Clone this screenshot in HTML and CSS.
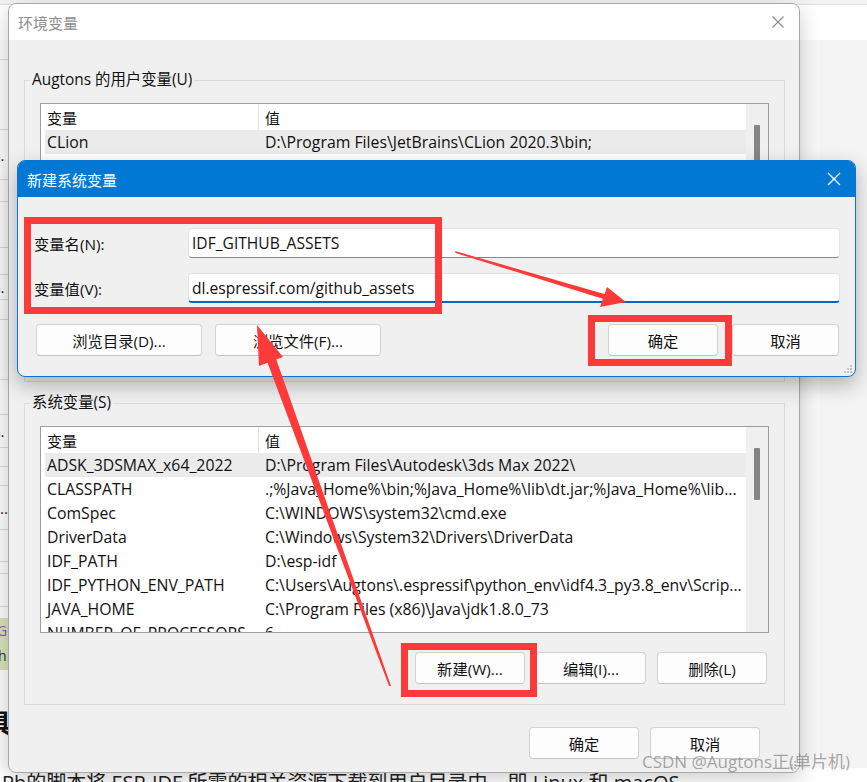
FILE: index.html
```html
<!DOCTYPE html>
<html lang="zh-CN">
<head>
<meta charset="utf-8">
<title>环境变量</title>
<link rel="stylesheet" href="styles.css">
</head>
<body>
<div class="desktop">

  <div class="bg-window">
    <div class="bg-top"></div>
    <div class="bg-main">
      <div class="bg-left">
        <div class="bl ra"></div>
        <div class="bl rb"></div>
        <div class="bl rc"><span>).</span></div>
        <div class="bl rd"></div>
        <div class="bl re"></div>
        <div class="bl rf"></div>
        <div class="bl rg"><span>).</span></div>
        <div class="bl rh"></div>
        <div class="bl ri"></div>
        <div class="bl rj"></div>
        <div class="bl rk"><span>).</span></div>
        <div class="bl rl"></div>
        <div class="bl rm"></div>
        <div class="bl rn"><span>...</span></div>
        <div class="bl ro"></div>
        <div class="bl rp"></div>
        <div class="bl rq"></div>
        <div class="bl-green"><span class="g">G</span><span class="h">h</span></div>
        <div class="bl-head">具</div>
      </div>
      <div class="bg-center"></div>
      <div class="bg-strip"></div>
    </div>
    <div class="bg-foot">Pb的脚本将 ESP-IDF 所需的相关资源下载到用户目录中，即 Linux 和 macOS</div>
  </div>

  <div class="env">
    <div class="env-title">
      <span>环境变量</span>
      <svg width="12" height="12" viewBox="0 0 12 12"><path d="M0.5 0.5 L11.5 11.5 M11.5 0.5 L0.5 11.5" stroke="#8a8a8a" stroke-width="1.1" fill="none"/></svg>
    </div>
    <div class="env-body">
      <div class="group">
        <span class="group-title">Augtons 的用户变量(U)</span>
        <div class="list">
          <div class="list-main">
            <div class="lrow head"><span class="c1">变量</span><span class="c2">值</span></div>
            <div class="lrow sel"><span class="c1">CLion</span><span class="c2">D:\Program Files\JetBrains\CLion 2020.3\bin;</span></div>
          </div>
          <div class="scroll"><div class="thumb"></div></div>
        </div>
        <div class="actions">
          <button class="btn">新建(N)...</button>
          <button class="btn">编辑(E)...</button>
          <button class="btn">删除(D)</button>
        </div>
      </div>

      <div class="group g2">
        <span class="group-title">系统变量(S)</span>
        <div class="list">
          <div class="list-main">
            <div class="lrow head"><span class="c1">变量</span><span class="c2">值</span></div>
            <div class="lrow sel"><span class="c1">ADSK_3DSMAX_x64_2022</span><span class="c2">D:\Program Files\Autodesk\3ds Max 2022\</span></div>
            <div class="lrow"><span class="c1">CLASSPATH</span><span class="c2">.;%Java_Home%\bin;%Java_Home%\lib\dt.jar;%Java_Home%\lib...</span></div>
            <div class="lrow"><span class="c1">ComSpec</span><span class="c2">C:\WINDOWS\system32\cmd.exe</span></div>
            <div class="lrow"><span class="c1">DriverData</span><span class="c2">C:\Windows\System32\Drivers\DriverData</span></div>
            <div class="lrow"><span class="c1">IDF_PATH</span><span class="c2">D:\esp-idf</span></div>
            <div class="lrow"><span class="c1">IDF_PYTHON_ENV_PATH</span><span class="c2">C:\Users\Augtons\.espressif\python_env\idf4.3_py3.8_env\Scrip...</span></div>
            <div class="lrow"><span class="c1">JAVA_HOME</span><span class="c2">C:\Program Files (x86)\Java\jdk1.8.0_73</span></div>
            <div class="lrow"><span class="c1">NUMBER_OF_PROCESSORS</span><span class="c2">6</span></div>
          </div>
          <div class="scroll"><div class="thumb"></div></div>
        </div>
        <div class="actions">
          <button class="btn">新建(W)...</button>
          <button class="btn">编辑(I)...</button>
          <button class="btn">删除(L)</button>
        </div>
      </div>

      <div class="env-actions">
        <button class="btn">确定</button>
        <button class="btn">取消</button>
      </div>
    </div>
    <svg class="grip" width="10" height="10" viewBox="0 0 10 10"><g fill="#c4c4c4"><rect x="7" y="1" width="2" height="2"/><rect x="4" y="4" width="2" height="2"/><rect x="7" y="4" width="2" height="2"/><rect x="1" y="7" width="2" height="2"/><rect x="4" y="7" width="2" height="2"/><rect x="7" y="7" width="2" height="2"/></g></svg>
  </div>

  <div class="newvar">
    <div class="nv-title">
      <span>新建系统变量</span>
      <svg width="14" height="14" viewBox="0 0 14 14"><path d="M1 1 L13 13 M13 1 L1 13" stroke="#ffffff" stroke-width="1.3" fill="none"/></svg>
    </div>
    <div class="nv-body">
      <div class="nv-form">
        <label class="nv-label">变量名(N):</label>
        <div class="field">IDF_GITHUB_ASSETS</div>
        <label class="nv-label">变量值(V):</label>
        <div class="field focus">dl.espressif.com/github_assets</div>
      </div>
      <div class="nv-actions">
        <div class="nv-left">
          <button class="btn wide">浏览目录(D)...</button>
          <button class="btn wide">浏览文件(F)...</button>
        </div>
        <div class="nv-right">
          <button class="btn ok">确定</button>
          <button class="btn cancel">取消</button>
        </div>
      </div>
    </div>
    <svg class="grip" width="10" height="10" viewBox="0 0 10 10"><g fill="#c4c4c4"><rect x="7" y="1" width="2" height="2"/><rect x="4" y="4" width="2" height="2"/><rect x="7" y="4" width="2" height="2"/><rect x="1" y="7" width="2" height="2"/><rect x="4" y="7" width="2" height="2"/><rect x="7" y="7" width="2" height="2"/></g></svg>
  </div>

  <svg class="annot" width="867" height="782" viewBox="0 0 867 782">
    <g fill="none" stroke="#fc3a3a" stroke-width="7">
      <rect x="27.5" y="220.5" width="411" height="90"/>
      <rect x="591.5" y="318.5" width="137" height="44"/>
      <rect x="404.5" y="646.5" width="129" height="47"/>
    </g>
    <g fill="#fc3a3a">
      <polygon points="455,251 455.6,253 605,299.5 606,294.5"/>
      <polygon points="607,287 626,302 600,307"/>
      <polygon points="389,686 391,686 274,353 265,356"/>
      <polygon points="257,325 283,357 259,366"/>
    </g>
  </svg>

  <div class="watermark">CSDN @Augtons正(单片机)</div>
</div>
</body>
</html>
```

FILE: styles.css
```css
* { box-sizing: border-box; }
html, body { margin: 0; padding: 0; }
body {
  width: 867px;
  height: 782px;
  overflow: hidden;
  font-family: "Open Sans", "Noto Sans CJK SC", sans-serif;
  font-size: 15px;
  color: #111;
  background: #f3f3f3;
}
button { font: inherit; color: inherit; }

.desktop {
  position: relative;
  width: 867px;
  height: 782px;
  overflow: hidden;
}

/* ---------- background window ---------- */
.bg-window {
  position: absolute;
  inset: 0;
  display: flex;
  flex-direction: column;
  background: #f3f3f3;
}
.bg-top {
  height: 36px;
  margin-top: 4px;
  background: #fff;
  border-top: 1px solid #e2e2e2;
  flex: none;
}
.bg-main {
  flex: 1;
  display: flex;
  min-height: 0;
}
.bg-left {
  width: 30px;
  background: #fbfbfb;
  display: flex;
  flex-direction: column;
  font-size: 15px;
}
.bl {
  border-bottom: 1px solid #d9d9d9;
  display: flex;
  align-items: center;
  color: #222;
  flex: none;
}
.bl span { margin-left: -4px; }
.ra { height: 20px; }
.rb { height: 70px; }
.rc { height: 50px; }
.rd { height: 22px; }
.re { height: 46px; }
.rf { height: 27px; }
.rg { height: 25px; }
.rh { height: 20px; }
.ri { height: 60px; }
.rj { height: 35px; }
.rk { height: 33px; }
.rl { height: 19px; }
.rm { height: 19px; }
.rn { height: 44px; }
.ro { height: 32px; }
.rp { height: 12px; }
.rq { height: 33px; }
.bl-green {
  height: 52px;
  margin-top: 11px;
  background: #d6e1b7;
  display: flex;
  flex-direction: column;
  font-size: 14px;
  line-height: 25px;
  flex: none;
}
.bl-green .g { color: #9b55b5; margin-left: -3px; }
.bl-green .h { color: #333; margin-left: -2px; }
.bl-head {
  margin-top: 38px;
  margin-left: -14px;
  font-size: 26px;
  font-weight: 700;
  line-height: 30px;
  color: #111;
  flex: none;
}
.bg-center { flex: 1; }
.bg-strip {
  width: 18px;
  margin-right: 47px;
  background: #f7f7f7;
}
.bg-foot {
  height: 14px;
  flex: none;
  overflow: hidden;
  padding-left: 2px;
  font-size: 20px;
  line-height: 30px;
  white-space: nowrap;
  color: #222;
  background: #fff;
}

/* ---------- environment dialog ---------- */
.env {
  position: absolute;
  left: 8px;
  top: 3px;
  width: 792px;
  height: 770px;
  background: #f0f0f0;
  border: 1px solid #a8a8a8;
  border-radius: 8px;
  box-shadow: 0 6px 22px rgba(0, 0, 0, 0.2);
  overflow: hidden;
  display: flex;
  flex-direction: column;
}
.env-title {
  height: 36px;
  flex: none;
  background: #fff;
  display: flex;
  align-items: center;
  justify-content: space-between;
  padding: 0 15px 0 9px;
  color: #8c8c8c;
}
.env-body {
  flex: 1;
  padding: 40px 14px 0 15px;
  display: flex;
  flex-direction: column;
}
.group {
  position: relative;
  border: 1px solid #dadada;
  padding: 22px 15px 20px 15px;
  flex: none;
}
.group.g2 { margin-top: 21px; }
.group-title {
  position: absolute;
  top: -11px;
  left: 5px;
  padding: 0 2px;
  line-height: 20px;
  background: #f0f0f0;
  color: #111;
  font-size: 15.4px;
}
.list {
  height: 207px;
  border: 1px solid #9d9d9d;
  background: #fff;
  display: flex;
}
.list-main {
  flex: 1;
  min-width: 0;
  padding-left: 4px;
  overflow: hidden;
}
.lrow {
  display: flex;
  height: 24px;
  align-items: center;
  white-space: nowrap;
  font-size: 15.8px;
}
.lrow.head { height: 26px; font-size: 15px; }
.lrow.sel { background: #ebebeb; }
.c1 {
  width: 213px;
  flex: none;
  padding-left: 2px;
  overflow: hidden;
}
.c2 {
  flex: 1;
  min-width: 0;
  padding-left: 7px;
  overflow: hidden;
}
.head .c2 {
  border-left: 1px solid #e5e5e5;
  padding-left: 6px;
  align-self: stretch;
  display: flex;
  align-items: center;
}
.scroll {
  width: 22px;
  flex: none;
  background: #f0f0f0;
  padding: 21px 0 0 8px;
}
.thumb {
  width: 6px;
  height: 52px;
  background: #858585;
  border-radius: 1px;
}
.actions {
  display: flex;
  justify-content: flex-end;
  gap: 11px;
  margin-top: 19px;
  padding-right: 2px;
}
.btn {
  width: 110px;
  height: 32px;
  background: #fdfdfd;
  border: 1px solid #d3d3d3;
  border-bottom-color: #c2c2c2;
  border-radius: 4px;
  padding: 0;
  display: flex;
  align-items: center;
  justify-content: center;
  font-size: 15.3px;
}
.env-actions {
  display: flex;
  justify-content: flex-end;
  gap: 11px;
  margin-top: 22px;
  padding-right: 25px;
}
.grip {
  position: absolute;
  right: 2px;
  bottom: 2px;
}

/* ---------- new variable dialog ---------- */
.newvar {
  position: absolute;
  left: 17px;
  top: 160px;
  width: 839px;
  height: 217px;
  border: 1px solid #0a74d0;
  border-radius: 8px;
  background: #f0f0f0;
  box-shadow: 0 8px 20px rgba(0, 0, 0, 0.28);
  overflow: hidden;
  display: flex;
  flex-direction: column;
}
.nv-title {
  height: 36px;
  flex: none;
  background: #0078d4;
  color: #fff;
  display: flex;
  align-items: center;
  justify-content: space-between;
  padding: 0 14px 0 9px;
}
.nv-body {
  flex: 1;
  padding: 31px 15px 0 16px;
  display: flex;
  flex-direction: column;
}
.nv-form {
  display: grid;
  grid-template-columns: 154px 1fr;
  row-gap: 15px;
  align-items: center;
}
.nv-label { color: #111; font-size: 15.3px; }
.field {
  height: 30px;
  background: #fff;
  border: 1px solid #e3e3e3;
  border-bottom: 1px solid #868686;
  border-radius: 4px;
  padding-left: 3px;
  display: flex;
  align-items: center;
  white-space: nowrap;
  font-size: 15.6px;
}
.field.focus {
  border-bottom: 2px solid #0067c0;
  padding-top: 1px;
}
.nv-actions {
  display: flex;
  justify-content: space-between;
  margin-top: 21px;
}
.nv-left {
  display: flex;
  gap: 13px;
  padding-left: 2px;
}
.nv-right {
  display: flex;
  gap: 14px;
  padding-right: 1px;
}
.btn.wide { width: 166px; }
.btn.ok { width: 110px; }
.btn.cancel { width: 107px; }

/* ---------- annotations ---------- */
.annot {
  position: absolute;
  left: 0;
  top: 0;
  pointer-events: none;
}
.watermark {
  position: absolute;
  left: 642px;
  top: 750px;
  font-size: 17px;
  line-height: 24px;
  color: rgba(110, 110, 110, 0.6);
  white-space: nowrap;
  pointer-events: none;
}
```
